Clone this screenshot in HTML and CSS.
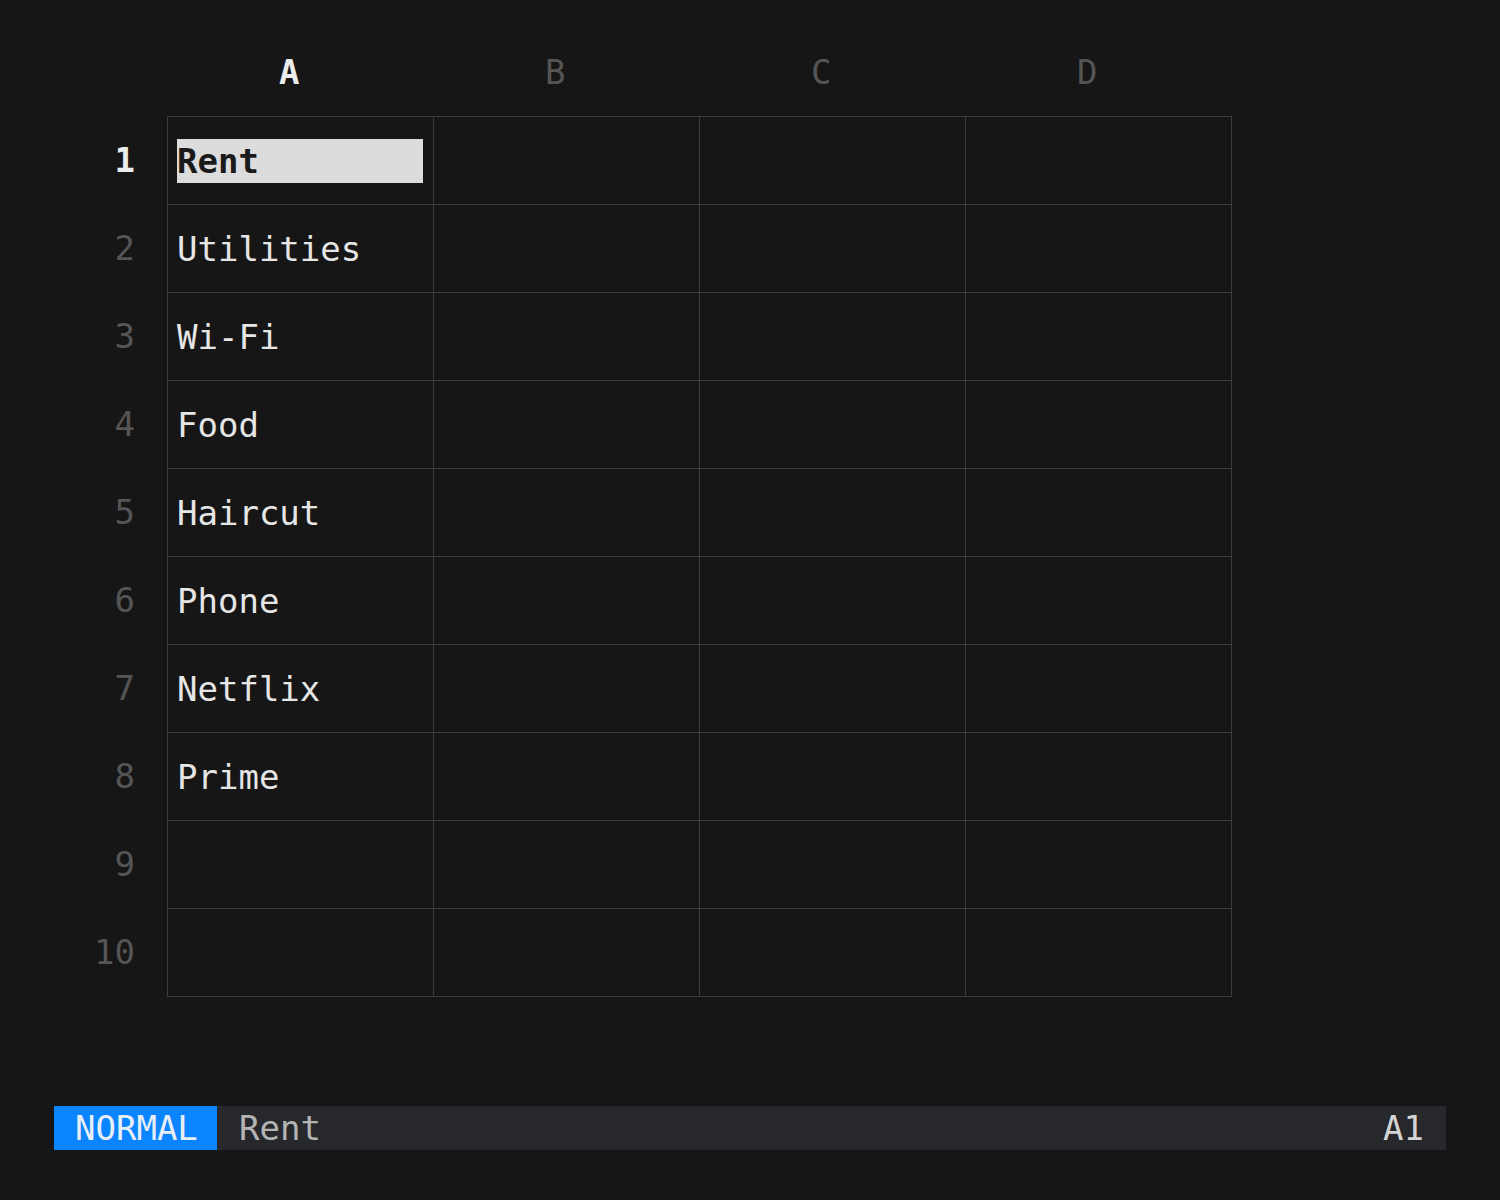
FILE: index.html
```html
<!DOCTYPE html>
<html>
<head>
<meta charset="utf-8">
<link rel="stylesheet" href="styles.css">
</head>
<body>
<div class="page">
  <div class="col-headers">
    <div class="col-head active">A</div>
    <div class="col-head">B</div>
    <div class="col-head">C</div>
    <div class="col-head">D</div>
  </div>
  <div class="sheet">
    <div class="row-labels">
      <div class="row-label active">1</div>
      <div class="row-label">2</div>
      <div class="row-label">3</div>
      <div class="row-label">4</div>
      <div class="row-label">5</div>
      <div class="row-label">6</div>
      <div class="row-label">7</div>
      <div class="row-label">8</div>
      <div class="row-label">9</div>
      <div class="row-label">10</div>
    </div>
    <div class="grid">
      <div class="cell"><span class="val selected">Rent</span></div><div class="cell"></div><div class="cell"></div><div class="cell"></div>
      <div class="cell"><span class="val">Utilities</span></div><div class="cell"></div><div class="cell"></div><div class="cell"></div>
      <div class="cell"><span class="val">Wi-Fi</span></div><div class="cell"></div><div class="cell"></div><div class="cell"></div>
      <div class="cell"><span class="val">Food</span></div><div class="cell"></div><div class="cell"></div><div class="cell"></div>
      <div class="cell"><span class="val">Haircut</span></div><div class="cell"></div><div class="cell"></div><div class="cell"></div>
      <div class="cell"><span class="val">Phone</span></div><div class="cell"></div><div class="cell"></div><div class="cell"></div>
      <div class="cell"><span class="val">Netflix</span></div><div class="cell"></div><div class="cell"></div><div class="cell"></div>
      <div class="cell"><span class="val">Prime</span></div><div class="cell"></div><div class="cell"></div><div class="cell"></div>
      <div class="cell"></div><div class="cell"></div><div class="cell"></div><div class="cell"></div>
      <div class="cell"></div><div class="cell"></div><div class="cell"></div><div class="cell"></div>
    </div>
  </div>
  <div class="status">
    <div class="mode">NORMAL</div>
    <div class="content">Rent</div>
    <div class="pos">A1</div>
  </div>
</div>
</body>
</html>
```
FILE: styles.css
```css
html, body {
  margin: 0;
  padding: 0;
  background: #161616;
}
body {
  font-family: "DejaVu Sans Mono", "Liberation Mono", monospace;
  font-size: 34px;
  color: #e6e6e6;
  width: 1500px;
  height: 1200px;
}
.page {
  padding-top: 50px;
}
.col-headers {
  display: flex;
  margin-left: 167px;
  height: 44px;
  line-height: 44px;
}
.col-head {
  width: 266px;
  box-sizing: border-box;
  padding-left: 112px;
  color: #555555;
}
.col-head.active {
  color: #ececec;
  font-weight: bold;
}
.sheet {
  display: flex;
  margin-top: 22px;
}
.row-labels {
  width: 135px;
  margin-right: 32px;
  padding-top: 1px;
}
.row-label {
  height: 88px;
  line-height: 86px;
  text-align: right;
  color: #555555;
}
.row-label.active {
  color: #ececec;
  font-weight: bold;
}
.grid {
  display: grid;
  grid-template-columns: repeat(4, 266px);
  grid-auto-rows: 88px;
  border-left: 1px solid #3c3c3c;
  border-top: 1px solid #3c3c3c;
}
.cell {
  box-sizing: border-box;
  border-right: 1px solid #3c3c3c;
  border-bottom: 1px solid #3c3c3c;
  padding: 0 10px 0 9px;
  display: flex;
  align-items: center;
}
.val {
  display: block;
  flex: 1;
  height: 44px;
  line-height: 44px;
  color: #e6e6e6;
  white-space: nowrap;
}
.val.selected {
  background: #dcdcdc;
  color: #1a1a1a;
  font-weight: bold;
}
.status {
  display: flex;
  margin: 109px 54px 0 54px;
  height: 44px;
  line-height: 44px;
  background: #27282c;
}
.mode {
  background: #0a84ff;
  color: #e8eef6;
  padding: 0 21px;
  width: 163px;
  box-sizing: border-box;
}
.content {
  flex: 1;
  padding-left: 22px;
  color: #b4b4b4;
}
.pos {
  padding-right: 22px;
  color: #d4d4d4;
}
```
